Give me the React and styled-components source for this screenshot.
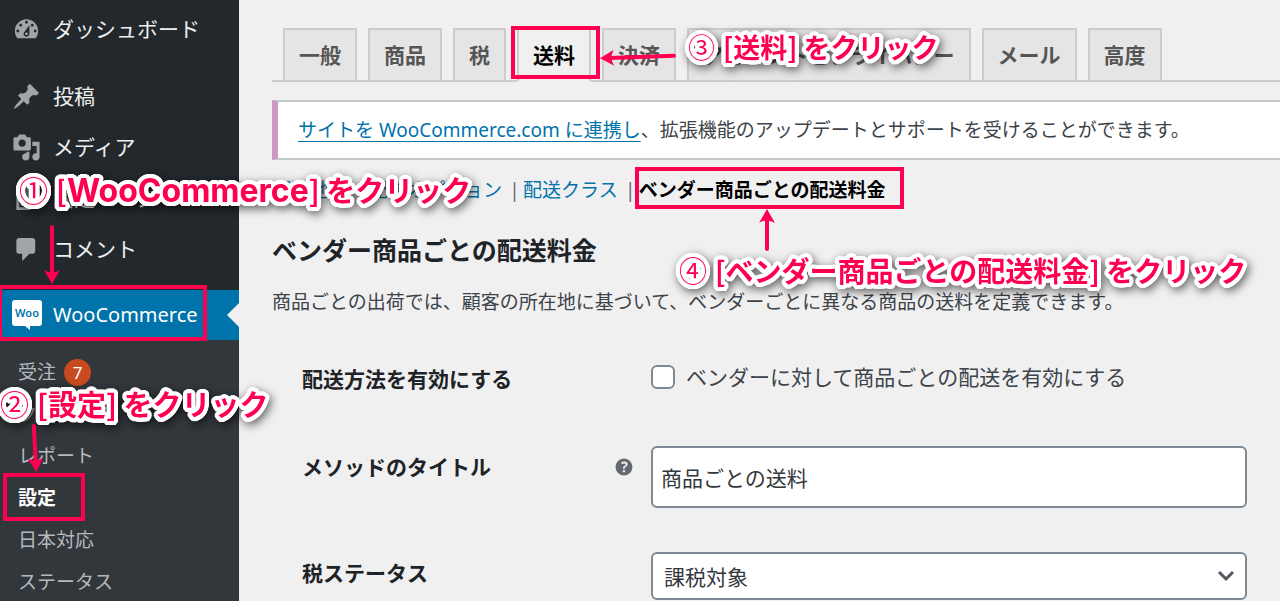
import { useState } from 'react';
import styled, { createGlobalStyle, css } from 'styled-components';

const GlobalStyle = createGlobalStyle`
  *, *::after {
    box-sizing: border-box;
  }

  body {
    margin: 0;
    overflow: hidden;
    background: #f0f0f0;
    color: #3c434a;
    font-family: "Noto Sans", "Noto Sans CJK JP", sans-serif;
    font-size: 19px;
    line-height: 28px;
  }

  input, select, button {
    font: inherit;
    color: inherit;
  }
`;

const ICONS = {
    dashboard: 'M3.76 16h12.48c1.1-1.37 1.76-3.11 1.76-5 0-4.42-3.58-8-8-8s-8 3.58-8 8c0 1.89.66 3.63 1.76 5zM10 4c.55 0 1 .45 1 1s-.45 1-1 1-1-.45-1-1 .45-1 1-1zM6 6c.55 0 1 .45 1 1s-.45 1-1 1-1-.45-1-1 .45-1 1-1zm8 0c.55 0 1 .45 1 1s-.45 1-1 1-1-.45-1-1 .45-1 1-1zm-5.37 5.55L12 7v6c0 1.1-.9 2-2 2s-2-.9-2-2c0-.57.24-1.08.63-1.45zM4 10c.55 0 1 .45 1 1s-.45 1-1 1-1-.45-1-1 .45-1 1-1zm12 0c.55 0 1 .45 1 1s-.45 1-1 1-1-.45-1-1 .45-1 1-1zm-5 3c0-.55-.45-1-1-1s-1 .45-1 1 .45 1 1 1 1-.45 1-1z',
    post: 'M10.44 3.02l1.82-1.82 6.36 6.35-1.83 1.82c-1.05-.68-2.48-.57-3.41.36l-.75.75c-.92.93-1.04 2.35-.35 3.41l-1.83 1.82-2.41-2.41-2.8 2.79c-.42.42-3.38 2.71-3.8 2.29s1.86-3.39 2.28-3.81l2.79-2.79L4.1 9.36l1.83-1.82c1.05.69 2.48.57 3.4-.36l.75-.75c.93-.92 1.05-2.35.36-3.41z',
    media: 'M13 11V4c0-.55-.45-1-1-1h-1.67L9 1H5L3.67 3H2c-.55 0-1 .45-1 1v7c0 .55.45 1 1 1h10c.55 0 1-.45 1-1zM7 4.5c1.38 0 2.5 1.12 2.5 2.5S8.38 9.5 7 9.5 4.5 8.38 4.5 7 5.62 4.5 7 4.5zM14 6h5v10.5c0 1.38-1.12 2.5-2.5 2.5S14 17.88 14 16.5s1.12-2.5 2.5-2.5c.17 0 .34.02.5.05V9h-3V6zm-4 8.05V13h2v3.5c0 1.38-1.12 2.5-2.5 2.5S7 17.88 7 16.5 8.12 14 9.5 14c.17 0 .34.02.5.05z',
    page: 'M6 15V2h10v13H6zm-1 1h8v2H3V5h2v11z',
    comment: 'M5 2h9c1.1 0 2 .9 2 2v7c0 1.1-.9 2-2 2h-2l-5 5v-5H5c-1.1 0-2-.9-2-2V4c0-1.1.9-2 2-2z',
    help: 'M17 10c0-3.87-3.14-7-7-7-3.87 0-7 3.13-7 7s3.13 7 7 7c3.86 0 7-3.13 7-7zm-6.3 1.48H9.14v-.43c0-.38.08-.7.24-.98s.46-.57.88-.89c.41-.29.68-.53.81-.71.14-.18.2-.39.2-.62 0-.25-.09-.44-.28-.58-.19-.13-.45-.19-.79-.19-.58 0-1.25.15-2 .46l-.64-1.28c.87-.49 1.8-.74 2.77-.74.81 0 1.45.2 1.92.58.48.39.71.91.71 1.55 0 .43-.09.8-.29 1.11-.19.32-.57.67-1.11 1.06-.38.28-.61.49-.71.63-.1.15-.15.34-.15.57v.46zm-1.47 2.74c-.18-.17-.27-.42-.27-.73 0-.33.08-.58.26-.75s.43-.25.77-.25c.32 0 .57.09.75.26s.27.42.27.74c0 .3-.09.55-.27.72-.18.18-.43.27-.75.27-.33 0-.58-.09-.76-.26z',
};

const MENU = [
    { icon: 'post', label: '投稿' },
    { icon: 'media', label: 'メディア' },
    { icon: 'page', label: '固定ページ' },
    { icon: 'comment', label: 'コメント' },
];

const SUBMENU = [
    { label: '受注', count: 7 },
    { label: 'クーポン' },
    { label: 'レポート' },
    { label: '設定', current: true },
    { label: '日本対応' },
    { label: 'ステータス' },
];

const TABS = ['一般', '商品', '税', '送料', '決済', 'アカウントとプライバシー', 'メール', '高度'];

const SECTIONS = ['配送地域', '配送オプション', '配送クラス', 'ベンダー商品ごとの配送料金'];

// round white outline for the notes
const OUTLINE = Array.from({ length: 24 }, (_, i) => {
    const angle = (i * Math.PI) / 12;
    return `${(Math.cos(angle) * 4).toFixed(1)}px ${(Math.sin(angle) * 4).toFixed(1)}px 0 #fff`;
}).join(', ');

function Icon({ name, size = 29 }) {
    return (
        <svg width={size} height={size} viewBox="0 0 20 20" fill="currentColor" aria-hidden="true">
            <path d={ICONS[name]} />
        </svg>
    )
}

function WooIcon() {
    return (
        <svg width="30" height="30" viewBox="0 0 30 30" aria-hidden="true">
            <path fill="#fff" d="M3 0h24a3 3 0 0 1 3 3v20a3 3 0 0 1-3 3h-9v4l-5-4H3a3 3 0 0 1-3-3V3a3 3 0 0 1 3-3z" />
            <WooText x="15" y="17" textAnchor="middle">Woo</WooText>
        </svg>
    )
}

function Sidebar() {
    return (
        <Side>
            <MenuLink href="#dashboard"><IconCell><Icon name="dashboard" /></IconCell>ダッシュボード</MenuLink>
            <MenuGroup>
                {MENU.map(({ icon, label }) => (
                    <MenuLink key={icon} href={`#${icon}`}><IconCell><Icon name={icon} /></IconCell>{label}</MenuLink>
                ))}
            </MenuGroup>
            <MenuLink href="#woocommerce" $active><IconCell><WooIcon /></IconCell>WooCommerce</MenuLink>
            <Submenu>
                {SUBMENU.map(({ label, count, current }) => (
                    <SubmenuLink key={label} href="#submenu" $current={current}>
                        {label}
                        {count && <Count>{count}</Count>}
                    </SubmenuLink>
                ))}
            </Submenu>
        </Side>
    )
}

function Settings() {
    const [enabled, setEnabled] = useState(false);
    const [title, setTitle] = useState('商品ごとの送料');

    return (
        <Form>
            <Row>
                <RowHead><FieldName htmlFor="enabled">配送方法を有効にする</FieldName></RowHead>
                <CheckLabel>
                    <Checkbox id="enabled" type="checkbox" checked={enabled} onChange={(e) => setEnabled(e.target.checked)} />
                    ベンダーに対して商品ごとの配送を有効にする
                </CheckLabel>
            </Row>
            <Row>
                <RowHead>
                    <FieldName htmlFor="title">メソッドのタイトル</FieldName>
                    <Icon name="help" size={24} />
                </RowHead>
                <TextInput id="title" type="text" value={title} onChange={(e) => setTitle(e.target.value)} />
            </Row>
            <Row>
                <RowHead><FieldName htmlFor="tax">税ステータス</FieldName></RowHead>
                <SelectWrap>
                    <Select id="tax" defaultValue="taxable">
                        <option value="taxable">課税対象</option>
                        <option value="none">なし</option>
                    </Select>
                    <Chevron width="18" height="12" viewBox="0 0 18 12" aria-hidden="true">
                        <path d="M2 2l7 7 7-7" fill="none" stroke="#50575e" strokeWidth="3" />
                    </Chevron>
                </SelectWrap>
            </Row>
        </Form>
    )
}

function Arrow({ length, ...place }) {
    return (
        <ArrowSvg {...place} width="18" height={length} viewBox={`0 0 18 ${length}`} aria-hidden="true">
            <path d={`M9 2V${length - 10}`} stroke="#ff0050" strokeWidth="4" strokeLinecap="round" />
            <path d={`M1 ${length - 14}Q9 ${length - 9} 17 ${length - 14}L9 ${length}z`} fill="#ff0050" />
        </ArrowSvg>
    )
}

function Note({ number, children, ...place }) {
    return (
        <NoteText {...place}>
            <NoteNumber>{number}</NoteNumber>
            {children}
        </NoteText>
    )
}

function App() {
    return (
        <Page>
            <GlobalStyle />
            <Sidebar />
            <Content>
                <Tabs>
                    {TABS.map((tab) => <Tab key={tab} type="button" $active={tab === '送料'}>{tab}</Tab>)}
                </Tabs>
                <Notice><Link href="#connect" $underline>サイトを WooCommerce.com に連携し</Link>、拡張機能のアップデートとサポートを受けることができます。</Notice>
                <Sections>
                    {SECTIONS.map((name, i) => (
                        <Section key={name}>
                            <Link href="#section" $current={i === 3}>{name}</Link>
                        </Section>
                    ))}
                </Sections>
                <Title>ベンダー商品ごとの配送料金</Title>
                <Lead>商品ごとの出荷では、顧客の所在地に基づいて、ベンダーごとに異なる商品の送料を定義できます。</Lead>
                <Settings />
            </Content>

            <Frame $x={-2} $y={285} $w={209} $h={56} />
            <Frame $x={3} $y={473} $w={82} $h={48} />
            <Frame $x={511} $y={26} $w={89} $h={53} />
            <Frame $x={635} $y={167} $w={269} $h={42} />
            <Note number="①" $x={19} $y={168} $size={29}>[<Latin>WooCommerce</Latin>] をクリック</Note>
            <Note number="②" $x={0} $y={382} $size={29}>[設定] をクリック</Note>
            <Note number="③" $x={688} $y={26} $size={27}>[送料] をクリック</Note>
            <Note number="④" $x={679} $y={249} $size={28}>[ベンダー商品ごとの配送料金] をクリック</Note>
            <Arrow length={59} $x={43} $y={225} />
            <Arrow length={48} $x={26} $y={424} $angle={-3} />
            <Arrow length={76} $x={629} $y={19} $angle={88} />
            <Arrow length={42} $x={758} $y={209} $angle={180} />
        </Page>
    )
}

export default App;

const Page = styled.div`
position: relative;
display: flex;
height: 100vh;
overflow: hidden;
`;

const Side = styled.nav`
display: flex;
flex-direction: column;
flex: none;
width: 239px;
padding-top: 4px;
background: #23282d;
`;

const MenuGroup = styled.div`
display: flex;
flex-direction: column;
gap: 1px;
padding: 17px 0 16px;
`;

const MenuLink = styled.a`
position: relative;
display: flex;
align-items: center;
flex: none;
height: 50px;
color: #eee;
font-size: 21px;
text-decoration: none;
${({ $active }) => $active && css`
background: #0073aa;
color: #fff;
font-size: 20px;

&::after {
content: "";
position: absolute;
right: 0;
border: 12px solid transparent;
border-left: 0;
border-right-color: #f0f0f0;
}
`}
`;

const IconCell = styled.span`
display: flex;
justify-content: center;
width: 53px;
color: #a0a5aa;
`;

const WooText = styled.text`
fill: #0073aa;
font-family: "Noto Sans", sans-serif;
font-size: 11px;
font-weight: 600;
`;

const Submenu = styled.div`
flex: 1;
padding-top: 11px;
background: #32373c;
`;

const SubmenuLink = styled.a`
display: flex;
align-items: center;
gap: 8px;
height: 42px;
padding-left: 18px;
color: ${({ $current }) => ($current ? '#fff' : '#b4b9be')};
font-weight: ${({ $current }) => ($current ? 700 : 400)};
text-decoration: none;
`;

const Count = styled.span`
width: 27px;
height: 27px;
border-radius: 50%;
background: #ca4a1f;
color: #fff;
font-size: 17px;
line-height: 27px;
text-align: center;
`;

const Content = styled.main`
flex: 1;
min-width: 0;
padding: 28px 0 0 33px;
`;

const Tabs = styled.div`
display: flex;
gap: 11px;
padding-left: 11px;
border-bottom: 2px solid #ccc;
`;

const Tab = styled.button`
flex: none;
height: 54px;
margin-bottom: -2px;
padding: 0 14px;
border: 2px solid #ccc;
background: #e5e5e5;
color: #555;
font-size: 21px;
font-weight: 700;
white-space: nowrap;
${({ $active }) => $active && css`
border-bottom-color: #f0f0f0;
background: #f0f0f0;
color: #000;
`}
`;

const Notice = styled.p`
margin: 18px 0 0;
padding: 14px 20px;
border: 2px solid #c3c8cc;
border-left: 6px solid #cc99c2;
border-right: 0;
background: #fff;
white-space: nowrap;
`;

const Link = styled.a`
color: #0073aa;
text-decoration: ${({ $underline }) => ($underline ? 'underline' : 'none')};
text-underline-offset: 4px;
text-decoration-thickness: 1px;
${({ $current }) => $current && css`
color: #000;
font-weight: 700;
`}
`;

const Sections = styled.ul`
display: flex;
margin: 16px 0 0;
padding: 0;
list-style: none;
white-space: nowrap;
`;

const Section = styled.li`
&:not(:last-child)::after {
content: "|";
display: inline-block;
width: 21px;
padding-left: 4px;
color: #646970;
text-align: center;
}
`;

const Title = styled.h2`
margin: 28px 0 0;
color: #1d2327;
font-size: 25px;
line-height: 36px;
`;

const Lead = styled.p`
margin: 20px 0 0;
white-space: nowrap;
`;

const Form = styled.form`
display: flex;
flex-direction: column;
gap: 44px;
padding: 42px 33px 0 30px;
font-size: 21px;
`;

const Row = styled.div`
display: grid;
grid-template-columns: 349px 1fr;
align-items: start;
`;

const RowHead = styled.div`
display: flex;
align-items: center;
justify-content: space-between;
padding: 7px 15px 0 0;
color: #646970;
`;

const FieldName = styled.label`
color: #1d2327;
font-weight: 700;
`;

const CheckLabel = styled.label`
display: flex;
align-items: center;
gap: 11px;
height: 38px;
margin-bottom: 6px;
white-space: nowrap;
`;

const Checkbox = styled.input`
appearance: none;
width: 24px;
height: 24px;
margin: 0;
border: 2px solid #7e8993;
border-radius: 6px;
background: #fff;

&:checked {
background: #0073aa;
}
`;

const fieldBox = css`
width: 100%;
border: 2px solid #7e8993;
border-radius: 6px;
background: #fff;
color: #32373c;
`;

const TextInput = styled.input`
${fieldBox}
height: 62px;
padding: 0 8px;
`;

const SelectWrap = styled.div`
position: relative;
`;

const Select = styled.select`
${fieldBox}
appearance: none;
height: 48px;
padding: 2px 40px 0 11px;
`;

const Chevron = styled.svg`
position: absolute;
top: 18px;
right: 12px;
pointer-events: none;
`;

const Frame = styled.div`
position: absolute;
left: ${({ $x }) => $x}px;
top: ${({ $y }) => $y}px;
width: ${({ $w }) => $w}px;
height: ${({ $h }) => $h}px;
border: 4px solid #ff0050;
pointer-events: none;
`;

const ArrowSvg = styled.svg`
position: absolute;
left: ${({ $x }) => $x}px;
top: ${({ $y }) => $y}px;
transform: rotate(${({ $angle }) => $angle || 0}deg);
pointer-events: none;
`;

const NoteText = styled.div`
position: absolute;
left: ${({ $x }) => $x}px;
top: ${({ $y }) => $y}px;
color: #ff0050;
font-family: "Noto Sans CJK JP", sans-serif;
font-size: ${({ $size }) => $size}px;
font-weight: 700;
line-height: 42px;
white-space: nowrap;
text-shadow: ${OUTLINE};
filter: drop-shadow(2px 3px 5px rgba(0, 0, 0, 0.6));
pointer-events: none;
`;

const NoteNumber = styled.span`
margin-right: 8px;
font-weight: 400;
`;

const Latin = styled.span`
font-family: Inter, sans-serif;
font-size: 32px;
`;
